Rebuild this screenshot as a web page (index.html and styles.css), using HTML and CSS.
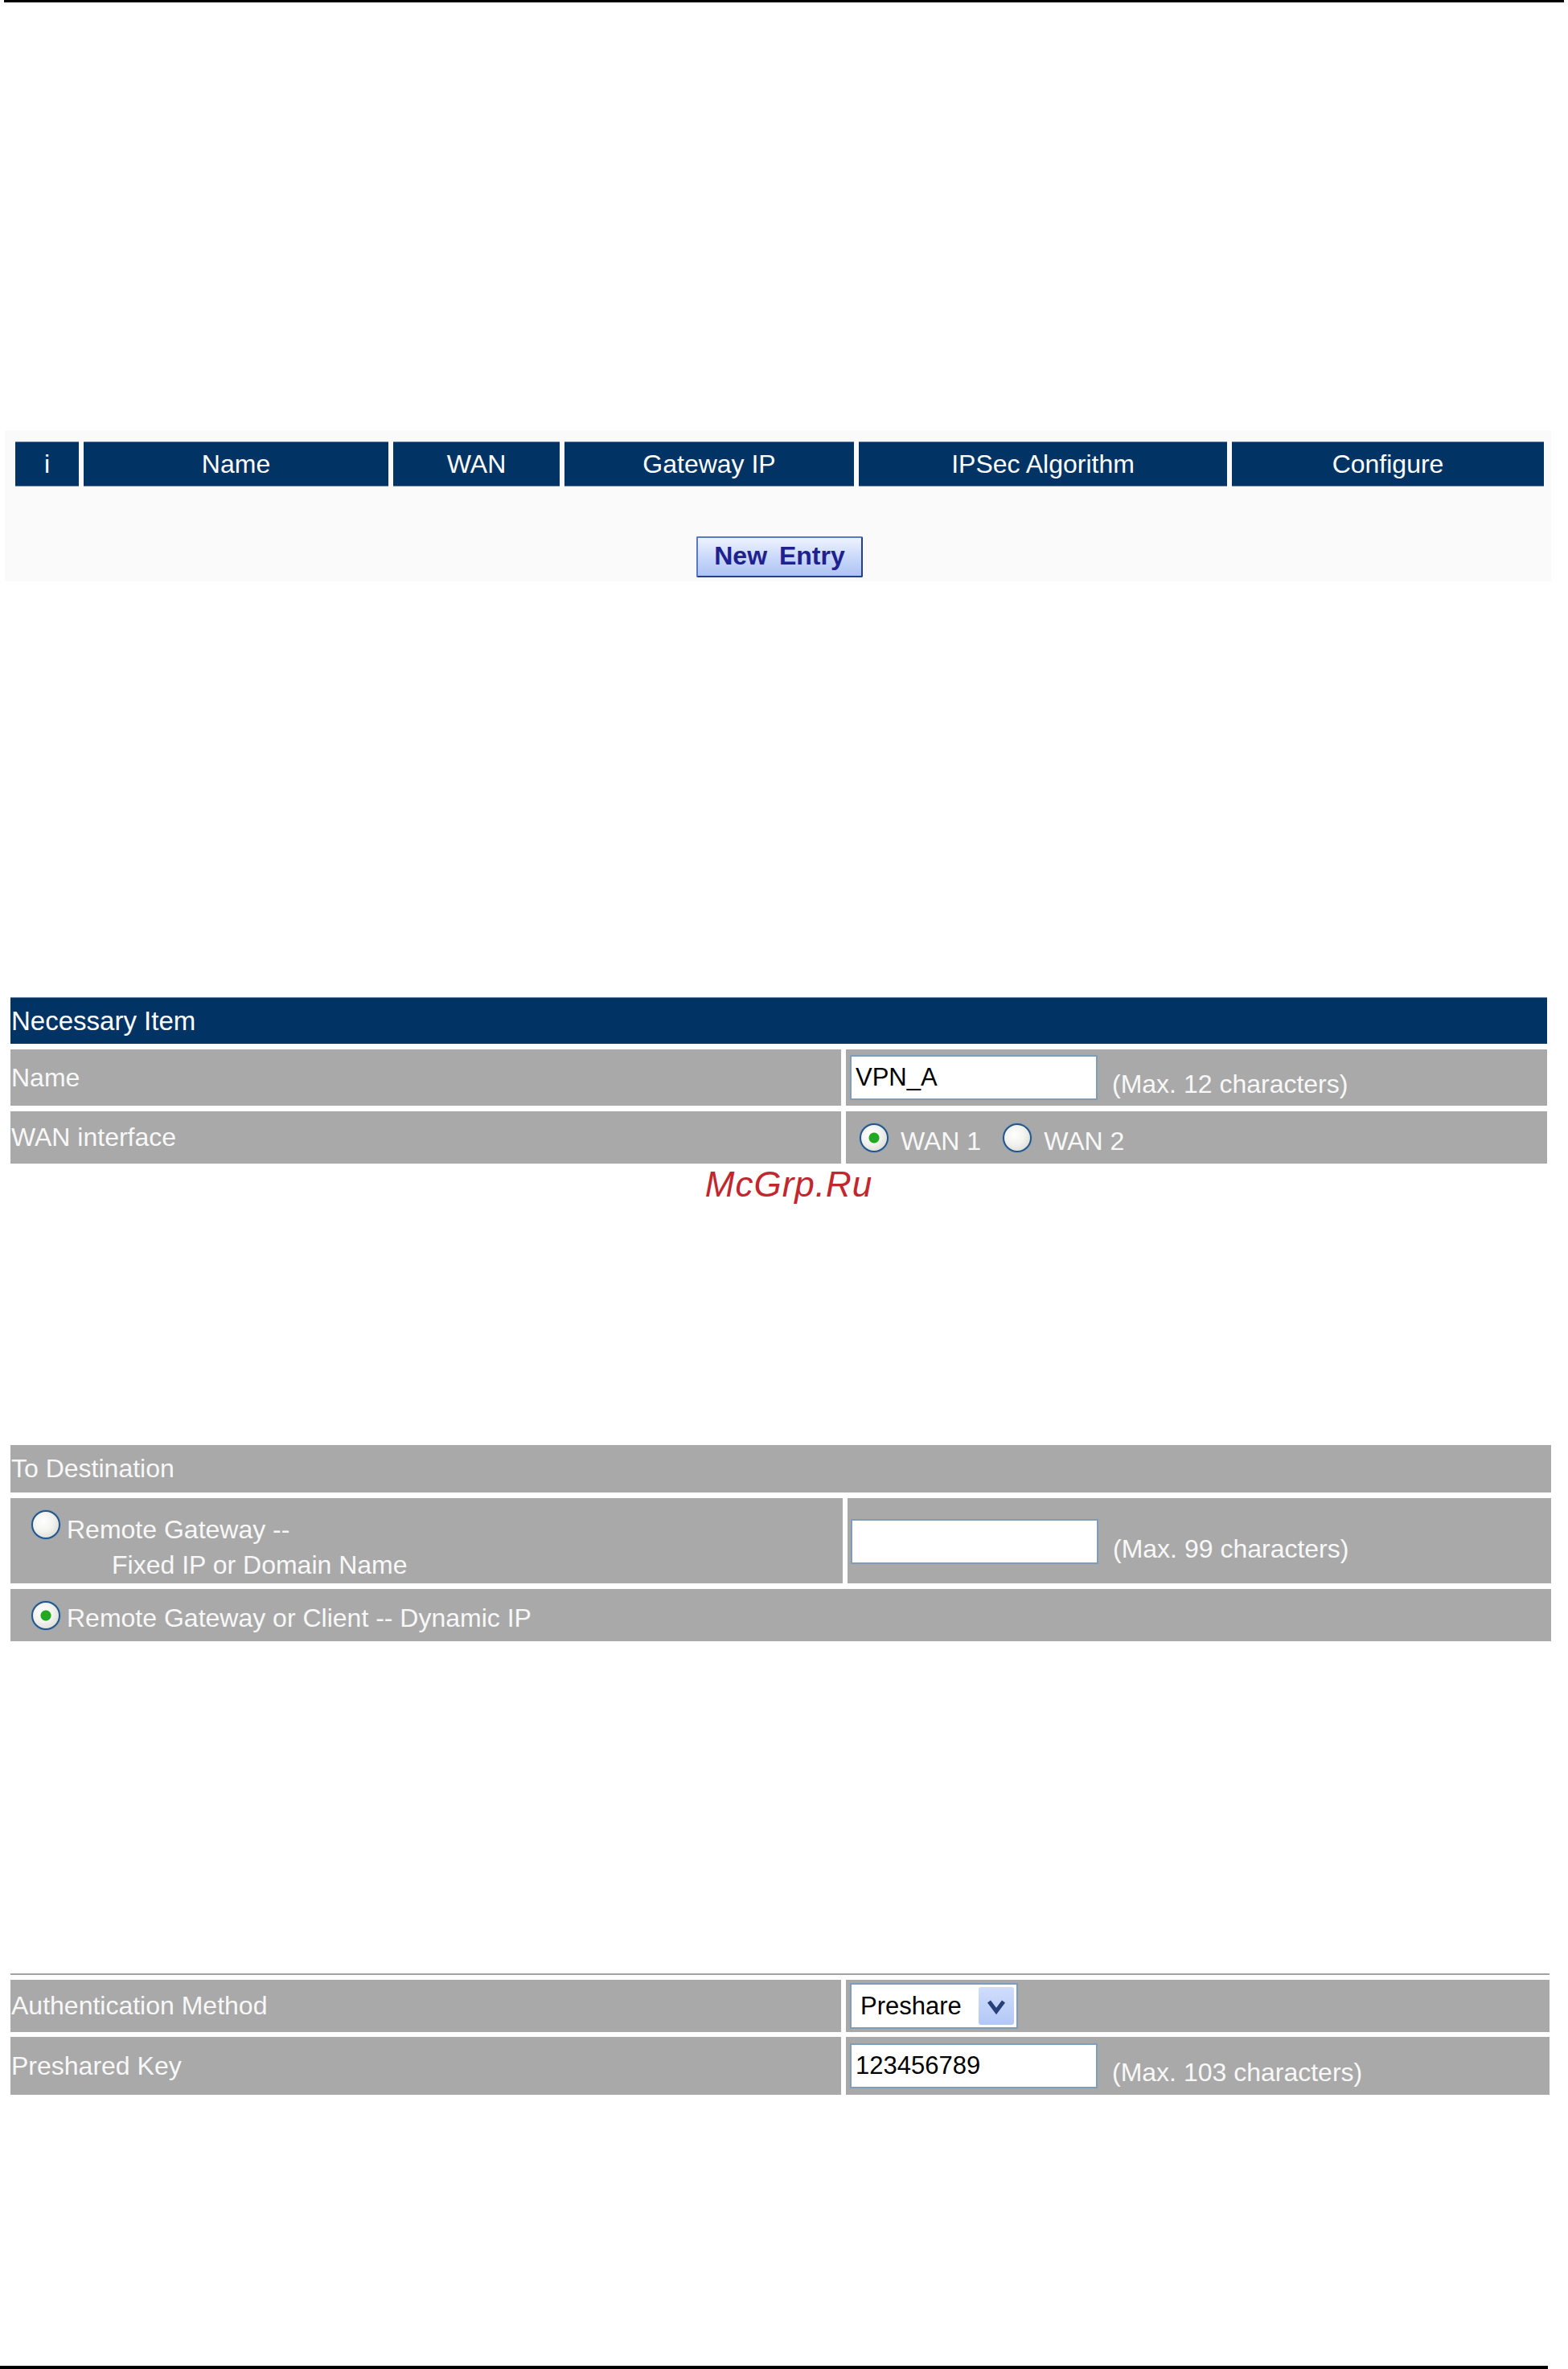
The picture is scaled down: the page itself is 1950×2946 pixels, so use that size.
FILE: index.html
```html
<!DOCTYPE html>
<html>
    <head>
        <meta charset="utf-8">
        <link rel="stylesheet" href="styles.css">
    </head>
    <body>
        <div class="rule-top"></div>

        <!-- elenco dei tunnel -->
        <div class="list-panel">
            <div class="list-head">
                <div class="head-cell">i</div>
                <div class="head-cell">Name</div>
                <div class="head-cell">WAN</div>
                <div class="head-cell">Gateway IP</div>
                <div class="head-cell">IPSec Algorithm</div>
                <div class="head-cell">Configure</div>
            </div>
            <button class="btn-new">New Entry</button>
        </div>

        <!-- voci obbligatorie -->
        <div class="form-table necessary">
            <div class="title-row span-all">Necessary Item</div>
            <div class="label-cell row-name">Name</div>
            <div class="value-cell row-name">
                <input class="text-box" type="text" value="VPN_A">
                <span class="hint hint-low">(Max. 12 characters)</span>
            </div>
            <div class="label-cell row-wan">WAN interface</div>
            <div class="value-cell row-wan wan-choice">
                <input class="radio" type="radio" name="wan" checked>
                <span class="wan-label">WAN 1</span>
                <input class="radio radio-second" type="radio" name="wan">
                <span class="wan-label">WAN 2</span>
            </div>
        </div>

        <div class="watermark">McGrp.Ru</div>

        <!-- destinazione -->
        <div class="form-table destination">
            <div class="grey-title span-all">To Destination</div>
            <div class="label-cell row-fixed">
                <div class="gw-option">
                    <input class="radio" type="radio" name="dest">
                    <div class="gw-text">
                        <span>Remote Gateway --</span>
                        <span class="gw-sub">Fixed IP or Domain Name</span>
                    </div>
                </div>
            </div>
            <div class="value-cell row-fixed">
                <input class="text-box" type="text" value="">
                <span class="hint hint-lower">(Max. 99 characters)</span>
            </div>
            <div class="label-cell row-dynamic span-all">
                <div class="gw-option centered">
                    <input class="radio" type="radio" name="dest" checked>
                    <span class="gw-line">Remote Gateway or Client -- Dynamic IP</span>
                </div>
            </div>
        </div>

        <!-- autenticazione -->
        <div class="form-table auth">
            <div class="label-cell row-method">Authentication Method</div>
            <div class="value-cell row-method">
                <div class="select-box">
                    <span class="select-text">Preshare</span>
                    <span class="select-arrow">
                        <svg width="26" height="22" viewBox="0 0 26 22">
                            <polyline points="4,5 13,17 22,5" fill="none" stroke="#27407a" stroke-width="5"/>
                        </svg>
                    </span>
                </div>
            </div>
            <div class="label-cell row-key">Preshared Key</div>
            <div class="value-cell row-key">
                <input class="text-box" type="text" value="123456789">
                <span class="hint hint-low">(Max. 103 characters)</span>
            </div>
        </div>

        <div class="rule-bottom"></div>
    </body>
</html>
```

FILE: styles.css
```css
body {
    margin: 0;
    background-color: white;
    font-family: "Liberation Sans", Arial, sans-serif;
    font-size: 32px;
}
.rule-top {
    height: 3px;
    margin: 0 5px;
    background-color: black;
}
.rule-bottom {
    height: 4px;
    width: 1925px;
    margin-top: 337px;
    background-color: black;
}

/* elenco */
.list-panel {
    width: 1923px;
    height: 188px;
    box-sizing: border-box;
    margin: 532px 0 0 6px;
    padding: 14px 9px 5px 13px;
    background-color: #fafafa;
}
.list-head {
    display: grid;
    grid-template-columns: 79px 379px 207px 360px 458px 1fr;
    column-gap: 6px;
    width: 1901px;
    height: 56px;
}
.head-cell {
    display: flex;
    align-items: center;
    justify-content: center;
    background-color: #013465;
    border-top: 1px solid #7088a8;
    border-bottom: 1px solid #7088a8;
    color: white;
    font-size: 32px;
}
.btn-new {
    display: block;
    width: 207px;
    height: 51px;
    margin: 62px auto 0;
    padding: 0 0 2px;
    border: 2px solid #5a78c8;
    border-right-color: #233f8e;
    border-bottom-color: #233f8e;
    border-radius: 2px;
    background: linear-gradient(#eef3ff, #c7d7fa 55%, #adc3f1);
    color: #20208f;
    font-family: "Liberation Sans", Arial, sans-serif;
    font-size: 32px;
    font-weight: bold;
    word-spacing: 6px;
}

/* tabelle dei campi */
.form-table {
    display: grid;
    grid-template-columns: 1033px 1fr;
    column-gap: 6px;
    row-gap: 7px;
    margin-left: 13px;
    color: #f8f8f8;
}
.span-all {
    grid-column: 1 / -1;
}
.necessary {
    width: 1911px;
    margin-top: 517px;
}
.destination {
    width: 1916px;
    margin-top: 300px;
    grid-template-columns: 1035px 1fr;
}
.auth {
    width: 1914px;
    margin-top: 413px;
    padding-top: 6px;
    row-gap: 6px;
    border-top: 2px solid #a2a2a2;
}
.title-row {
    height: 58px;
    display: flex;
    align-items: center;
    padding-left: 1px;
    background-color: #013465;
    border-top: 1px solid #7088a8;
    box-sizing: border-box;
    color: white;
    font-size: 33px;
}
.grey-title {
    height: 59px;
    display: flex;
    align-items: center;
    padding-left: 1px;
    background-color: #a9a9a9;
}
.label-cell,
.value-cell {
    display: flex;
    align-items: center;
    background-color: #a9a9a9;
    box-sizing: border-box;
}
.label-cell {
    padding-left: 1px;
}
.value-cell {
    padding-left: 5px;
}
.row-name { height: 70px; }
.row-wan { height: 65px; }
.row-fixed { height: 106px; }
.row-dynamic { height: 65px; }
.row-method { height: 65px; }
.row-key { height: 72px; }

.text-box {
    width: 308px;
    height: 56px;
    box-sizing: border-box;
    margin: 0;
    padding: 0 5px;
    border: 2px solid #7f9db9;
    background-color: white;
    color: black;
    font-family: "Liberation Sans", Arial, sans-serif;
    font-size: 31px;
}
.row-fixed .text-box {
    margin-left: -1px;
    margin-top: 2px;
}
.hint {
    margin-left: 18px;
}
.hint-low {
    margin-top: 16px;
}
.hint-lower {
    margin-top: 20px;
}

/* pulsanti radio */
.radio {
    appearance: none;
    -webkit-appearance: none;
    flex: none;
    width: 36px;
    height: 36px;
    margin: 0;
    border: 2px solid #23568a;
    border-radius: 50%;
    box-shadow: 0 0 0 1px #8fa4bb;
    background: radial-gradient(circle at 40% 38%, #ffffff 0, #f2f2ee 45%, #d2d2cb 100%);
}
.radio:checked {
    background:
        radial-gradient(circle, #22a822 0, #22a822 6px, transparent 7px),
        radial-gradient(circle at 40% 38%, #ffffff 0, #f2f2ee 45%, #d2d2cb 100%);
}
.wan-choice {
    padding-left: 17px;
}
.wan-label {
    margin: 10px 0 0 15px;
}
.radio-second {
    margin-left: 27px;
}
.gw-option {
    display: flex;
    align-items: flex-start;
    padding-left: 25px;
}
.gw-option.centered {
    align-items: center;
}
.row-fixed.label-cell {
    align-items: flex-start;
    padding-top: 15px;
}
.gw-text {
    display: flex;
    flex-direction: column;
    margin-left: 8px;
    line-height: 44px;
    margin-top: 2px;
}
.gw-sub {
    padding-left: 56px;
}
.gw-line {
    margin: 8px 0 0 8px;
}

/* menu a tendina */
.select-box {
    display: flex;
    align-items: center;
    width: 209px;
    height: 57px;
    box-sizing: border-box;
    border: 2px solid #7f9db9;
    background-color: white;
    color: black;
    padding: 0 3px 0 11px;
}
.select-text {
    flex: 1;
    font-size: 31px;
}
.select-arrow {
    display: flex;
    align-items: center;
    justify-content: center;
    width: 44px;
    height: 47px;
    border-radius: 3px;
    background: linear-gradient(#d0defd, #b3c8f7);
}

.watermark {
    margin-top: 2px;
    height: 48px;
    line-height: 48px;
    text-align: center;
    padding-left: 12px;
    color: #c1272d;
    font-style: italic;
    font-size: 44px;
    letter-spacing: 1px;
}
```
